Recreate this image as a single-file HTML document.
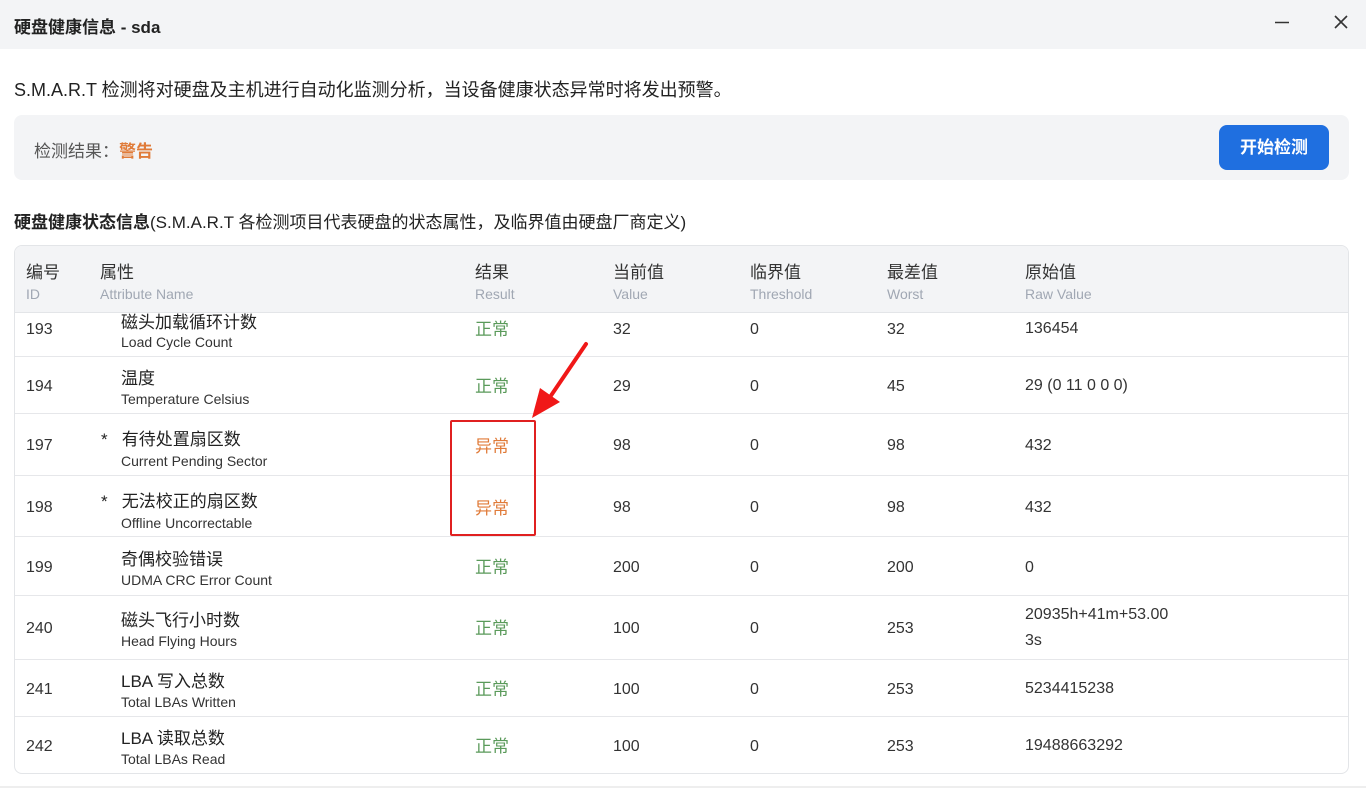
<!DOCTYPE html>
<html><head><meta charset="utf-8"><style>
*{margin:0;padding:0;box-sizing:border-box}
body{width:1366px;height:788px;overflow:hidden;background:#fff;font-family:"Liberation Sans","Noto Sans CJK SC",sans-serif;color:#222;position:relative}
.a{position:absolute;white-space:nowrap}
.hdr{position:absolute;left:0;top:0;width:1366px;height:49px;background:#f3f4f6}
.box{position:absolute;left:14px;top:115px;width:1335px;height:65px;background:#f3f4f6;border-radius:8px}
.btn{position:absolute;left:1219px;top:125px;width:110px;height:45px;background:#1f6fe0;border-radius:8px;color:#fff;font-weight:bold;font-size:17px;text-align:center;line-height:45px}
.tbl{position:absolute;left:14px;top:245px;width:1335px;height:529px;border:1px solid #e3e5e8;border-radius:8px;overflow:hidden}
.th{position:absolute;left:0;top:0;width:100%;height:67px;background:#f3f4f6;border-bottom:1px solid #e3e5e8}
.line{position:absolute;left:0;width:100%;height:1px;background:#e6e7ea}
.c1{font-size:17px;color:#333}
.c2{font-size:14px;color:#a0a7b3}
.v{font-size:16px;color:#333}
.cn{font-size:17px;color:#222}
.en{font-size:14px;color:#333}
.ok{font-size:17px;color:#5a9a5a}
.bad{font-size:17px;color:#e07b39}
</style></head><body>
<div class="hdr"></div>
<div class="a" style="left:14px;top:13px;font-size:17px;font-weight:bold">硬盘健康信息 - sda</div>
<svg class="a" style="left:1270px;top:14px" width="80" height="20"><path d="M5 8.5H19" stroke="#333" stroke-width="1.5"/><path d="M65 2L77 14M77 2L65 14" stroke="#333" stroke-width="1.6"/></svg>
<div class="a" style="left:14px;top:76px;font-size:18px">S.M.A.R.T 检测将对硬盘及主机进行自动化监测分析，当设备健康状态异常时将发出预警。</div>
<div class="box"></div>
<div class="a" style="left:34px;top:137px;font-size:17px;color:#555">检测结果：<b style="color:#e07b39">警告</b></div>
<div class="btn">开始检测</div>
<div class="a" style="left:14px;top:208px;font-size:17px"><b>硬盘健康状态信息</b>(S.M.A.R.T 各检测项目代表硬盘的状态属性，及临界值由硬盘厂商定义)</div>
<div class="tbl">
<div class="th"></div>
<div class="a c1" style="left:11px;top:12px">编号</div><div class="a c2" style="left:11px;top:40px">ID</div>
<div class="a c1" style="left:85px;top:12px">属性</div><div class="a c2" style="left:85px;top:40px">Attribute Name</div>
<div class="a c1" style="left:460px;top:12px">结果</div><div class="a c2" style="left:460px;top:40px">Result</div>
<div class="a c1" style="left:598px;top:12px">当前值</div><div class="a c2" style="left:598px;top:40px">Value</div>
<div class="a c1" style="left:735px;top:12px">临界值</div><div class="a c2" style="left:735px;top:40px">Threshold</div>
<div class="a c1" style="left:872px;top:12px">最差值</div><div class="a c2" style="left:872px;top:40px">Worst</div>
<div class="a c1" style="left:1010px;top:12px">原始值</div><div class="a c2" style="left:1010px;top:40px">Raw Value</div>

<div class="line" style="top:110px"></div>
<div class="line" style="top:167px"></div>
<div class="line" style="top:229px"></div>
<div class="line" style="top:290px"></div>
<div class="line" style="top:349px"></div>
<div class="line" style="top:413px"></div>
<div class="line" style="top:470px"></div>

<div class="a v" style="left:11px;top:75px">193</div><div class="a cn" style="left:106px;top:62px">磁头加载循环计数</div><div class="a en" style="left:106px;top:88px">Load Cycle Count</div><div class="a ok" style="left:460px;top:69px">正常</div><div class="a v" style="left:598px;top:75px">32</div><div class="a v" style="left:735px;top:75px">0</div><div class="a v" style="left:872px;top:75px">32</div><div class="a v" style="left:1010px;top:74px">136454</div>

<div class="a v" style="left:11px;top:132px">194</div><div class="a cn" style="left:106px;top:118px">温度</div><div class="a en" style="left:106px;top:145px">Temperature Celsius</div><div class="a ok" style="left:460px;top:126px">正常</div><div class="a v" style="left:598px;top:132px">29</div><div class="a v" style="left:735px;top:132px">0</div><div class="a v" style="left:872px;top:132px">45</div><div class="a v" style="left:1010px;top:131px">29 (0 11 0 0 0)</div>

<div class="a v" style="left:11px;top:191px">197</div><div class="a cn" style="left:86px;top:179px">*&nbsp;&nbsp; 有待处置扇区数</div><div class="a en" style="left:106px;top:207px">Current Pending Sector</div><div class="a bad" style="left:460px;top:186px">异常</div><div class="a v" style="left:598px;top:191px">98</div><div class="a v" style="left:735px;top:191px">0</div><div class="a v" style="left:872px;top:191px">98</div><div class="a v" style="left:1010px;top:191px">432</div>

<div class="a v" style="left:11px;top:253px">198</div><div class="a cn" style="left:86px;top:241px">*&nbsp;&nbsp; 无法校正的扇区数</div><div class="a en" style="left:106px;top:269px">Offline Uncorrectable</div><div class="a bad" style="left:460px;top:248px">异常</div><div class="a v" style="left:598px;top:253px">98</div><div class="a v" style="left:735px;top:253px">0</div><div class="a v" style="left:872px;top:253px">98</div><div class="a v" style="left:1010px;top:253px">432</div>

<div class="a v" style="left:11px;top:313px">199</div><div class="a cn" style="left:106px;top:299px">奇偶校验错误</div><div class="a en" style="left:106px;top:326px">UDMA CRC Error Count</div><div class="a ok" style="left:460px;top:307px">正常</div><div class="a v" style="left:598px;top:313px">200</div><div class="a v" style="left:735px;top:313px">0</div><div class="a v" style="left:872px;top:313px">200</div><div class="a v" style="left:1010px;top:313px">0</div>

<div class="a v" style="left:11px;top:374px">240</div><div class="a cn" style="left:106px;top:360px">磁头飞行小时数</div><div class="a en" style="left:106px;top:387px">Head Flying Hours</div><div class="a ok" style="left:460px;top:368px">正常</div><div class="a v" style="left:598px;top:374px">100</div><div class="a v" style="left:735px;top:374px">0</div><div class="a v" style="left:872px;top:374px">253</div><div class="a v" style="left:1010px;top:360px">20935h+41m+53.00</div><div class="a v" style="left:1010px;top:386px">3s</div>

<div class="a v" style="left:11px;top:435px">241</div><div class="a cn" style="left:106px;top:421px">LBA 写入总数</div><div class="a en" style="left:106px;top:448px">Total LBAs Written</div><div class="a ok" style="left:460px;top:429px">正常</div><div class="a v" style="left:598px;top:435px">100</div><div class="a v" style="left:735px;top:435px">0</div><div class="a v" style="left:872px;top:435px">253</div><div class="a v" style="left:1010px;top:434px">5234415238</div>

<div class="a v" style="left:11px;top:492px">242</div><div class="a cn" style="left:106px;top:478px">LBA 读取总数</div><div class="a en" style="left:106px;top:505px">Total LBAs Read</div><div class="a ok" style="left:460px;top:486px">正常</div><div class="a v" style="left:598px;top:492px">100</div><div class="a v" style="left:735px;top:492px">0</div><div class="a v" style="left:872px;top:492px">253</div><div class="a v" style="left:1010px;top:491px">19488663292</div>
</div>
<div class="a" style="left:450px;top:420px;width:86px;height:116px;border:2px solid #e02020;border-radius:2px"></div>
<svg class="a" style="left:520px;top:338px" width="80" height="90" viewBox="0 0 80 90"><path d="M66 6 L28 62" stroke="#f01818" stroke-width="4" stroke-linecap="round"/><polygon points="12,80 20,50 40,64" fill="#f01818"/></svg>
<div class="a" style="left:0;top:786px;width:1366px;height:2px;background:#eee"></div>
</body></html>
